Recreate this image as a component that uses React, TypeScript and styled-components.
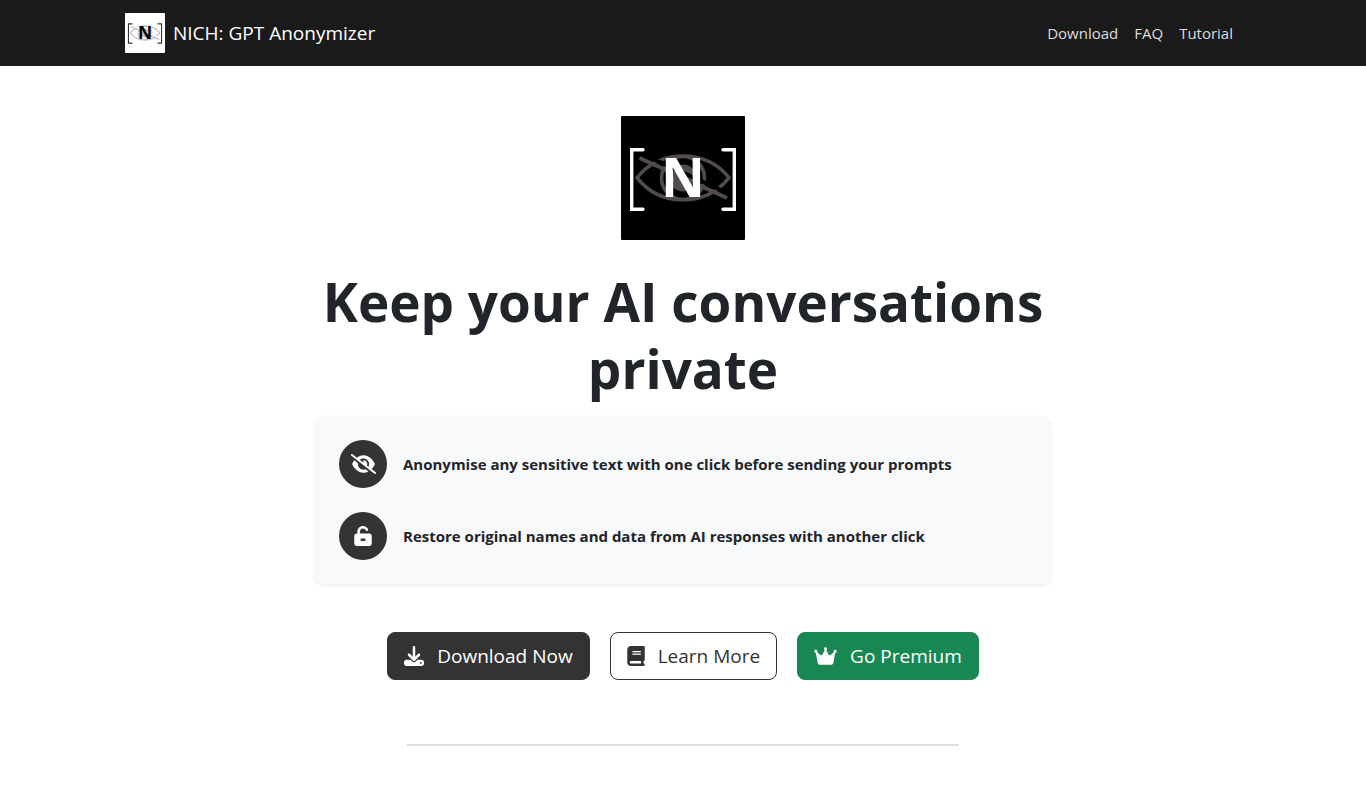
import React from "react";
import styled, { createGlobalStyle } from "styled-components";
import {
  FaBook,
  FaCrown,
  FaDownload,
  FaEyeSlash,
  FaUnlockKeyhole,
} from "react-icons/fa6";

const GlobalStyle = createGlobalStyle`
  *, *::before, *::after { box-sizing: border-box; }
  body {
    margin: 0;
    background: #fff;
    color: #212529;
    font-family: "Segoe UI", "Open Sans", "Noto Sans", sans-serif;
    font-size: 15px;
    line-height: 24px;
  }
`;

const Header = styled.header`
  background: #1a1a1a;
`;

const Container = styled.div`
  max-width: 1140px;
  margin: 0 auto;
  padding: 0 12px;
`;

const NavBar = styled(Container)`
  display: flex;
  flex-wrap: wrap;
  align-items: center;
  justify-content: space-between;
  min-height: 66px;
`;

const Brand = styled.a`
  display: flex;
  align-items: center;
  gap: 8px;
  color: #fff;
  font-size: 19px;
  line-height: 30px;
  text-decoration: none;
`;

const Nav = styled.nav`
  display: flex;
`;

const NavLink = styled.a`
  padding: 8px;
  color: #dddddd;
  text-decoration: none;

  &:hover {
    color: #fff;
  }
`;

const LogoSvg = styled.svg<{ $size: number }>`
  display: block;
  width: ${(p) => p.$size}px;
  height: ${(p) => p.$size}px;
  border-radius: 1px;
`;

const Hero = styled.main`
  display: flex;
  flex-direction: column;
  align-items: center;
  max-width: 760px;
  margin: 0 auto;
  padding: 50px 12px 54px;
`;

const Title = styled.h1`
  margin: 28px 0 14px;
  font-size: 53px;
  font-weight: 700;
  line-height: 67px;
  text-align: center;
`;

const Features = styled.ul`
  display: flex;
  flex-direction: column;
  gap: 24px;
  width: 100%;
  margin: 0;
  padding: 24px;
  list-style: none;
  background: #f8f9fb;
  border-radius: 10px;
  box-shadow: 0 2px 4px rgba(0, 0, 0, 0.07);
`;

const Feature = styled.li`
  display: flex;
  align-items: center;
  gap: 16px;
  font-weight: 700;
`;

const Glyph = styled.span<{ $width: number }>`
  display: block;
  flex: none;
  width: ${(p) => p.$width}px;
  height: 20px;

  svg {
    display: block;
    width: 100%;
    height: 100%;
  }
`;

const FeatureIcon = styled.span`
  display: flex;
  flex: none;
  align-items: center;
  justify-content: center;
  width: 48px;
  height: 48px;
  border-radius: 50%;
  background: #333;
  color: #fff;
`;

const Actions = styled.div`
  display: flex;
  flex-wrap: wrap;
  justify-content: center;
  gap: 20px;
  margin-top: 48px;
`;

const tones = {
  dark: { bg: "#333333", fg: "#ffffff", line: "#333333" },
  outline: { bg: "#ffffff", fg: "#333333", line: "#333333" },
  green: { bg: "#198754", fg: "#ffffff", line: "#198754" },
};

const Action = styled.a<{ $tone: keyof typeof tones }>`
  display: flex;
  align-items: center;
  gap: 13px;
  height: 48px;
  padding: 0 16px;
  border: 1px solid ${(p) => tones[p.$tone].line};
  border-radius: 8px;
  background: ${(p) => tones[p.$tone].bg};
  color: ${(p) => tones[p.$tone].fg};
  font-size: 19px;
  line-height: 30px;
  text-decoration: none;
`;

const Divider = styled.hr`
  width: 75%;
  height: 2px;
  margin: 64px 0 0;
  border: 0;
  background: #dedede;
`;

type LogoProps = {
  size: number;
  back: string;
  eye: string;
  bracket: string;
  letter: string;
};

function Logo({ size, back, eye, bracket, letter }: LogoProps) {
  return (
    <LogoSvg $size={size} viewBox="0 0 124 124" aria-hidden="true">
      <rect width="124" height="124" fill={back} />
      <g fill="none" stroke={eye} strokeWidth="3.6">
        <path d="M16 61.7C27 48 43 40 62 40s35 8 46 21.7C97 76 81 83.8 62 83.8S27 76 16 61.7Z" />
        <circle cx="62" cy="62" r="21.5" />
      </g>
      <circle cx="62" cy="62" r="13.5" fill={eye} />
      <path d="M29 41.5L101 74.5" stroke={back} strokeWidth="4" />
      <path d="M18.5 42L106 82" stroke={eye} strokeWidth="3.8" />
      <g fill="none" stroke={bracket} strokeWidth="3.4" strokeLinecap="round">
        <path d="M22 33.7H10.7V93.3H22" />
        <path d="M102 33.7H113.3V93.3H102" />
      </g>
      <text
        x="62"
        y="80.7"
        textAnchor="middle"
        fontFamily="Open Sans, sans-serif"
        fontSize="54"
        fontWeight="700"
        fill={letter}
      >
        N
      </text>
    </LogoSvg>
  );
}

export default function App() {
  return (
    <>
      <GlobalStyle />
      <Header>
        <NavBar>
          <Brand href="#">
            <Logo size={40} back="#ffffff" eye="#b9bfbf" bracket="#333333" letter="#000000" />
            NICH: GPT Anonymizer
          </Brand>
          <Nav>
            <NavLink href="#download">Download</NavLink>
            <NavLink href="#faq">FAQ</NavLink>
            <NavLink href="#tutorial">Tutorial</NavLink>
          </Nav>
        </NavBar>
      </Header>
      <Hero>
        <Logo size={124} back="#000000" eye="#524b4c" bracket="#ffffff" letter="#ffffff" />
        <Title>Keep your AI conversations private</Title>
        <Features>
          <Feature>
            <FeatureIcon>
              <Glyph $width={25}>
                <FaEyeSlash />
              </Glyph>
            </FeatureIcon>
            Anonymise any sensitive text with one click before sending your prompts
          </Feature>
          <Feature>
            <FeatureIcon>
              <Glyph $width={18}>
                <FaUnlockKeyhole />
              </Glyph>
            </FeatureIcon>
            Restore original names and data from AI responses with another click
          </Feature>
        </Features>
        <Actions>
          <Action $tone="dark" href="#download">
            <Glyph $width={20}>
              <FaDownload />
            </Glyph>
            Download Now
          </Action>
          <Action $tone="outline" href="#tutorial">
            <Glyph $width={18}>
              <FaBook />
            </Glyph>
            Learn More
          </Action>
          <Action $tone="green" href="#premium">
            <Glyph $width={23}>
              <FaCrown />
            </Glyph>
            Go Premium
          </Action>
        </Actions>
        <Divider />
      </Hero>
    </>
  );
}
